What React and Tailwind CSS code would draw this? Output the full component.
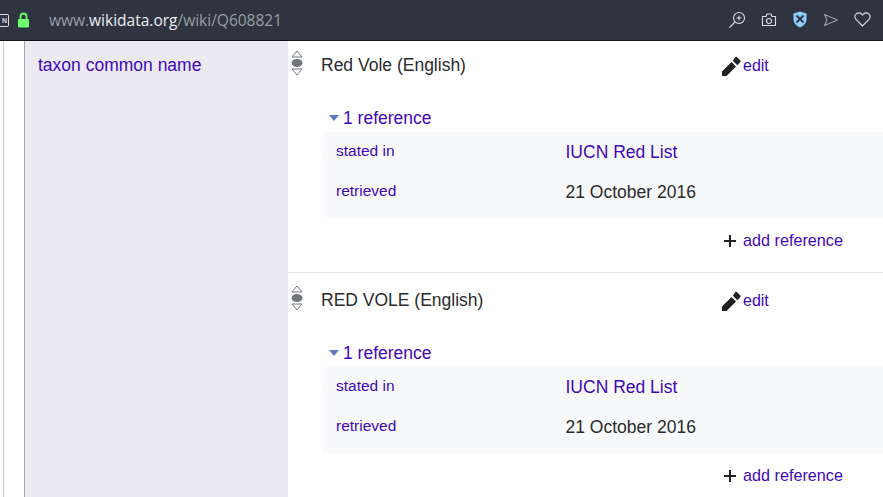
function Rank() {
  return (
    <svg width="12" height="26" viewBox="0 0 12 26" className="shrink-0">
      <path d="M6 1 L11 7 H1 Z" fill="#fff" stroke="#72777d" strokeWidth="1" />
      <ellipse cx="6" cy="13" rx="5.5" ry="4" fill="#72777d" />
      <path d="M1 19 H11 L6 25 Z" fill="#fff" stroke="#72777d" strokeWidth="1" />
    </svg>
  );
}
function Pencil() {
  return (
    <svg width="20" height="20" viewBox="0 0 20 20" className="shrink-0">
      <path fill="#202122" d="M1 15.5 V20 H5.5 L15 10.5 L10.5 6 Z M11.8 4.7 L16.3 9.2 L19.4 6 Q20 5.3 19.4 4.6 L15.8 1 Q15.1 .4 14.4 1 Z" />
    </svg>
  );
}
function Statement({ value, first }) {
  return (
    <div className={first ? "h-[232px] pt-[12px] border-b border-[#e6e7ec]" : "h-[235px] pt-[15px]"}>
      <div className="flex items-start h-[53px]">
        <div className="w-[33px] pl-[3px] mt-[-3px]"><Rank /></div>
        <div className="w-[400px] text-[#2a2b2c] text-[17.5px] leading-[24px]">{value} (English)</div>
        <div className="flex items-center gap-[2px] text-[16px] leading-[24px] mt-[1px] text-[#3f07b8]">
          <Pencil /><span>edit</span>
        </div>
      </div>
      <div className="pl-[41px] flex items-center gap-[4px] h-[24px] text-[#3f07b8] text-[17.5px] leading-[24px]">
        <svg width="10" height="6" viewBox="0 0 10 6"><path d="M0 0 H10 L5 6 Z" fill="#5b7ac0" /></svg>
        <span>1 reference</span>
      </div>
      <div className={`ml-[35px] mt-[2px] bg-[#f8f9fa] pl-[13px] pt-[7px] ${first ? "h-[85px]" : "h-[86px]"}`}>
        <div className="flex h-[40px] items-start">
          <div className="w-[229.5px] text-[#3f07b8] text-[15.5px] leading-[24px]">stated in</div>
          <div className="text-[#3f07b8] text-[17.5px] leading-[24px] mt-[1px]">IUCN Red List</div>
        </div>
        <div className="flex h-[40px] items-start">
          <div className="w-[229.5px] text-[#3f07b8] text-[15.5px] leading-[24px]">retrieved</div>
          <div className="text-[#2a2b2c] text-[17.5px] leading-[24px] mt-[1px]">21 October 2016</div>
        </div>
      </div>
      <div className={`flex items-center pl-[435px] text-[16.2px] leading-[24px] text-[#3f07b8] ${first ? "mt-[11px]" : "mt-[10px]"}`}>
        <svg width="14" height="14" viewBox="0 0 14 14" className="mr-[6px] mt-[2px]"><path d="M7 1 V13 M1 7 H13" stroke="#202122" strokeWidth="2" /></svg>
        <span>add reference</span>
      </div>
    </div>
  );
}
export default function App() {
  return (
    <div className="w-[883px] h-[497px] overflow-hidden flex flex-col bg-white font-['Liberation_Sans',sans-serif]">
      <header className="h-[41px] shrink-0 bg-[#2e3440] border-b border-[#111] flex items-center relative">
        <div className="w-[9px] h-[13px] border border-[#d8dee9] border-l-0 rounded-r-[2px] text-[#d8dee9] text-[7px] leading-[11px] font-bold flex justify-end overflow-hidden pr-[1px]">N</div>
        <svg width="13" height="16" viewBox="0 0 13 16" className="ml-[8px] mb-[1px]">
          <path d="M3.5 7 V4.5 a3 3 0 0 1 6 0 V7" fill="none" stroke="#6dfc6d" strokeWidth="1.8" />
          <rect x="1" y="7" width="11" height="8.5" rx="1.2" fill="#6dfc6d" />
        </svg>
        <div className="ml-[19px] text-[15.5px] text-[#9a9ea6] leading-[20px] font-['Open_Sans',sans-serif]">
          www.<span className="text-[#eceff4]">wikidata.org</span>/wiki/Q608821
        </div>
        <div className="ml-auto flex items-center gap-[15px] pr-[12px] mb-[1px]">
          <svg width="18" height="18" viewBox="0 0 18 18" fill="none" stroke="#d8dee9" strokeWidth="1.1"><circle cx="11" cy="7" r="5.5"/><path d="M11 4.5 V9.5 M8.5 7 H13.5 M7 11 L1.5 16.5" /></svg>
          <svg width="16" height="14" viewBox="0 0 16 14" fill="none" stroke="#d8dee9" strokeWidth="1.1"><path d="M1.5 3.5 H5 L6 1 H10 L11 3.5 H14.5 V12.5 H1.5 Z" strokeLinejoin="round"/><circle cx="8" cy="8" r="2.5"/></svg>
          <svg width="16" height="17" viewBox="0 0 16 17"><path d="M8 .5 L14.5 2.5 V9 Q14 14 8 16.5 Q2 14 1.5 9 V2.5 Z" fill="#8fd0fb"/><path d="M4.5 4.5 L11.5 11.5 M11.5 4.5 L4.5 11.5" stroke="#2e3440" strokeWidth="1.8"/></svg>
          <svg width="16" height="14" viewBox="0 0 16 14" fill="none" stroke="#9a9ea6" strokeWidth="1.1"><path d="M1.5 1.5 L14.5 7 L1.5 12.5 L4 7 Z" strokeLinejoin="round"/></svg>
          <svg width="17" height="15" viewBox="0 0 17 15" fill="none" stroke="#d8dee9" strokeWidth="1.1"><path d="M8.5 14 L2 7.5 Q-.5 4 2.5 1.6 Q6 -.3 8.5 3 Q11 -.3 14.5 1.6 Q17.5 4 15 7.5 Z"/></svg>
        </div>
      </header>
      <main className="flex flex-1 min-h-0">
        <div className="w-[25px] shrink-0 border-r border-[#a2a9b1]">
          <div className="w-[4px] h-full border-r border-[#c8ccd1]"></div>
        </div>
        <div className="w-[263px] shrink-0 bg-[#eaeaf0] pl-[13px] pt-[12px] text-[17.5px] leading-[24px] text-[#3f07b8]">taxon common name</div>
        <div className="flex-1 min-w-0">
          <Statement value="Red Vole" first />
          <Statement value="RED VOLE" />
        </div>
      </main>
    </div>
  );
}
